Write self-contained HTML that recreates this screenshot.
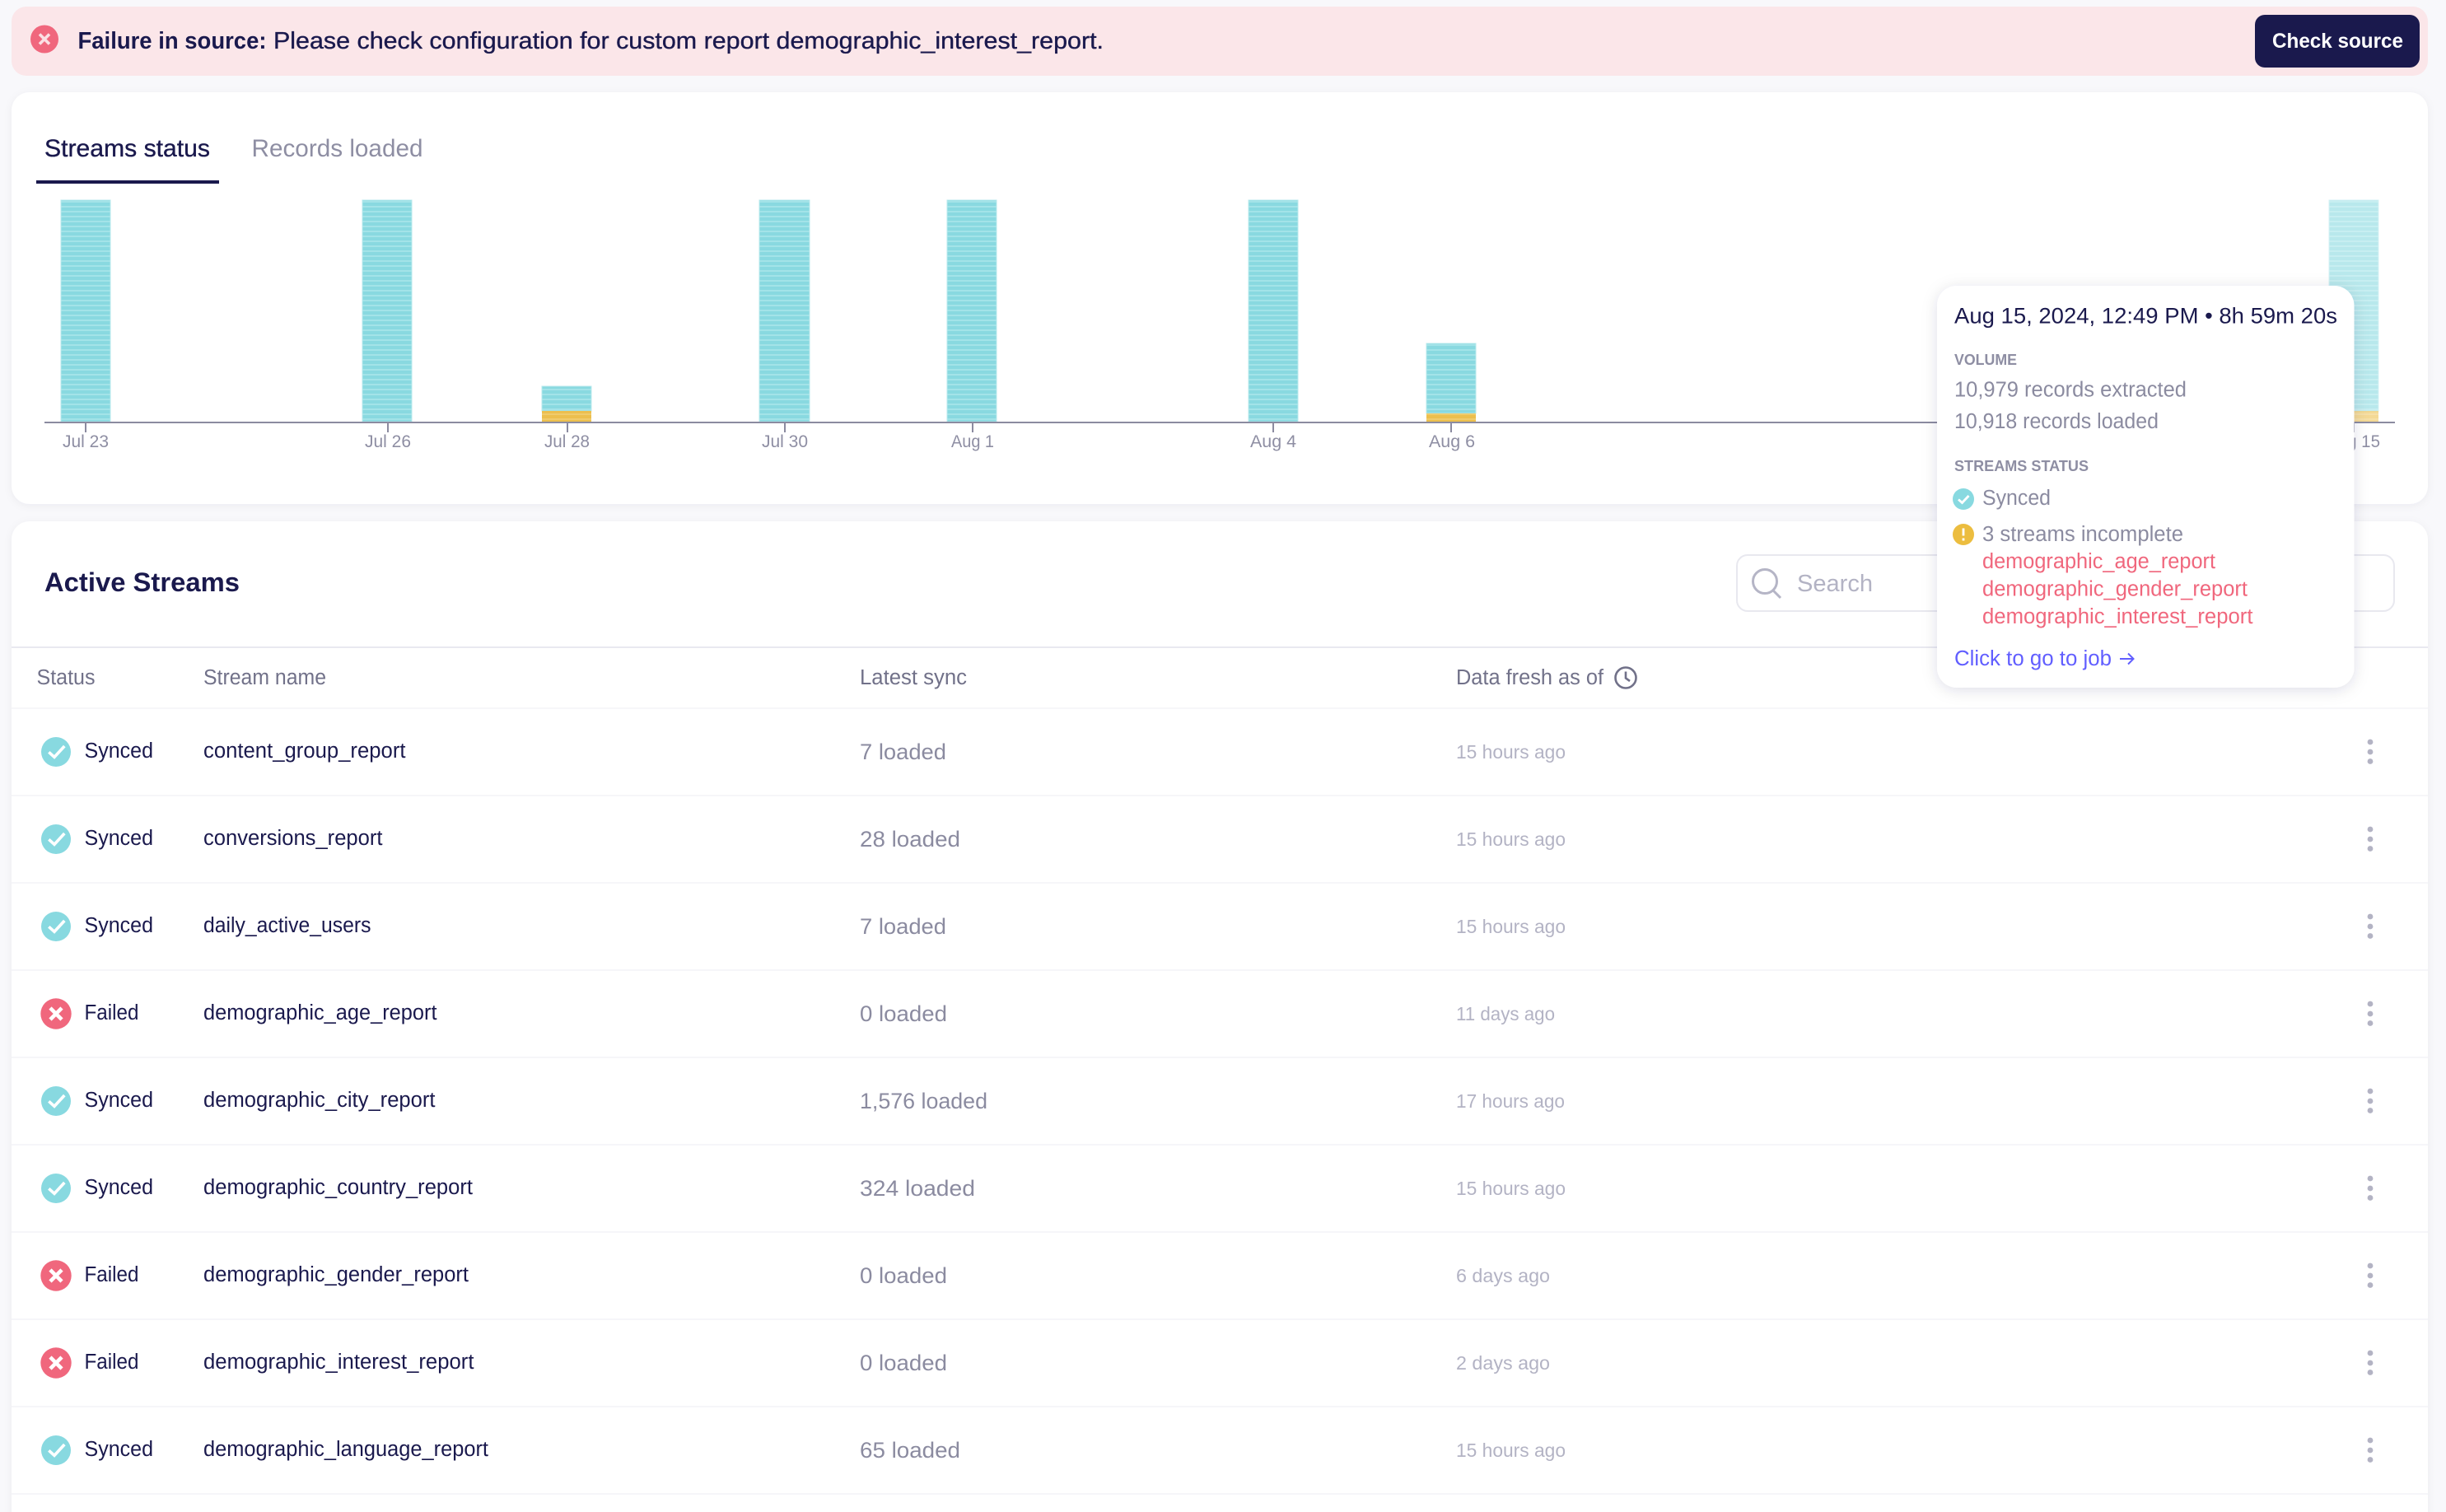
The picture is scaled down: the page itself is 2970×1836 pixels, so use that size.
<!DOCTYPE html>
<html lang="en"><head><meta charset="utf-8"><title>Active Streams</title>
<style>
html,body{margin:0;padding:0;background:#f8f8fb;width:2970px;height:1836px;overflow:hidden}
svg{display:block}
text{font-family:"Liberation Sans",Arial,sans-serif;fill:#1a194d}
.nm{font-size:25.5px}
.ls{font-size:27px;fill:#8b8ba0}
.fr{font-size:23.5px;fill:#b3b3c4}
.ax{font-size:21.5px;fill:#8e8ea3}
.hd{font-size:25.5px;fill:#717189}
.tt{font-size:25.5px;fill:#8b8ba0}
.cap{font-size:18.5px;font-weight:700;fill:#8e8ea3}
.rd{font-size:25.5px;fill:#f0677d}
</style></head><body>
<svg xmlns="http://www.w3.org/2000/svg" width="2970" height="1836" viewBox="0 0 2970 1836">
<defs>
<pattern id="s" patternUnits="userSpaceOnUse" width="10" height="6"><rect width="10" height="6" fill="#89d9e0"/><rect y="4" width="10" height="2" fill="#a3e3e8"/></pattern>
<pattern id="y" patternUnits="userSpaceOnUse" width="10" height="6"><rect width="10" height="6" fill="#ecbf4e"/><rect y="4" width="10" height="2" fill="#f0cb6c"/></pattern>
<filter id="cs" x="-2%" y="-5%" width="104%" height="110%"><feDropShadow dx="0" dy="2" stdDeviation="5" flood-color="#1a194d" flood-opacity=".05"/></filter>
<filter id="ts" x="-10%" y="-10%" width="120%" height="120%"><feDropShadow dx="0" dy="3" stdDeviation="9" flood-color="#1a194d" flood-opacity=".13"/></filter>
<g id="ok"><circle r="18" fill="#88d9e0"/><path d="M-8.7 .3L-2 6.3L10.3 -7" fill="none" stroke="#fff" stroke-width="3.6"/></g>
<g id="no"><circle r="18.7" fill="#f0677d"/><path d="M-7 -7L7 7M7 -7L-7 7" fill="none" stroke="#fff" stroke-width="4.6"/></g>
<g id="kb" fill="#b3b3c4"><circle cy="-12" r="3.4"/><circle r="3.4"/><circle cy="11.5" r="3.4"/></g>
</defs>

<!-- banner -->
<rect x="14" y="8" width="2934" height="84" rx="18" fill="#fbe6e9"/>
<circle cx="54" cy="47.5" r="17" fill="#f0677d"/>
<path d="M48 41.5L60 53.5M60 41.5L48 53.5" fill="none" stroke="#fbe0e4" stroke-width="3.6"/>
<text x="94.5" y="59" font-size="28.5" font-weight="700" textLength="229" lengthAdjust="spacingAndGlyphs">Failure in source:</text>
<text x="332" y="59" font-size="28.5" textLength="1008" lengthAdjust="spacingAndGlyphs" stroke="#1a194d" stroke-width=".35">Please check configuration for custom report demographic_interest_report.</text>
<rect x="2738" y="18" width="200" height="64" rx="12" fill="#1a194d"/>
<text x="2759" y="58" font-size="25" font-weight="700" style="fill:#fff" textLength="159" lengthAdjust="spacingAndGlyphs">Check source</text>

<!-- chart card -->
<rect x="14" y="112" width="2934" height="500" rx="22" fill="#fff" filter="url(#cs)"/>
<text x="54" y="190" font-size="29.5" textLength="201" lengthAdjust="spacingAndGlyphs" stroke="#1a194d" stroke-width=".35">Streams status</text>
<text x="305.5" y="190" font-size="29.5" style="fill:#8e8ea3" textLength="208" lengthAdjust="spacingAndGlyphs">Records loaded</text>
<rect x="44" y="219" width="222" height="4" fill="#1a194d"/>

<g stroke="#b8e9ed" stroke-width="1">
<rect x="74" y="243" width="60" height="269" fill="url(#s)"/>
<rect x="440" y="243" width="60" height="269" fill="url(#s)"/>
<rect x="658" y="469" width="60" height="30" fill="url(#s)"/>
<rect x="922" y="243" width="61" height="269" fill="url(#s)"/>
<rect x="1150" y="243" width="60" height="269" fill="url(#s)"/>
<rect x="1516" y="243" width="60" height="269" fill="url(#s)"/>
<rect x="1732" y="417" width="60" height="85" fill="url(#s)"/>
<g opacity=".6"><rect x="2828" y="243" width="60" height="256" fill="url(#s)"/></g>
</g>
<rect x="658" y="499" width="60" height="13" fill="url(#y)"/>
<rect x="1732" y="502" width="60" height="10" fill="url(#y)"/>
<rect x="2828" y="499" width="60" height="13" fill="url(#y)" opacity=".6"/>
<rect x="54" y="512" width="2854" height="2" fill="#8b8ba0"/>
<g fill="#8b8ba0">
<rect x="103" y="513" width="2" height="12"/><rect x="470" y="513" width="2" height="12"/><rect x="688" y="513" width="2" height="12"/><rect x="952" y="513" width="2" height="12"/><rect x="1180" y="513" width="2" height="12"/><rect x="1545" y="513" width="2" height="12"/><rect x="1761" y="513" width="2" height="12"/><rect x="2857" y="513" width="2" height="12"/>
</g>
<g class="ax">
<text class="ax" x="76" y="543" textLength="56" lengthAdjust="spacingAndGlyphs">Jul 23</text>
<text class="ax" x="443" y="543" textLength="56" lengthAdjust="spacingAndGlyphs">Jul 26</text>
<text class="ax" x="661" y="543" textLength="55" lengthAdjust="spacingAndGlyphs">Jul 28</text>
<text class="ax" x="925" y="543" textLength="56" lengthAdjust="spacingAndGlyphs">Jul 30</text>
<text class="ax" x="1155" y="543" textLength="52" lengthAdjust="spacingAndGlyphs">Aug 1</text>
<text class="ax" x="1518" y="543" textLength="56" lengthAdjust="spacingAndGlyphs">Aug 4</text>
<text class="ax" x="1735" y="543" textLength="56" lengthAdjust="spacingAndGlyphs">Aug 6</text>
<text class="ax" x="2825" y="543" textLength="65" lengthAdjust="spacingAndGlyphs">Aug 15</text>
</g>

<!-- streams card -->
<rect x="14" y="633" width="2934" height="1240" rx="22" fill="#fff" filter="url(#cs)"/>
<text x="54" y="718" font-size="32" font-weight="700" textLength="237" lengthAdjust="spacingAndGlyphs">Active Streams</text>
<rect x="2109" y="674" width="798" height="68" rx="13" fill="#fff" stroke="#e8e8ef" stroke-width="2"/>
<circle cx="2143" cy="706" r="14.5" fill="none" stroke="#b5b5c6" stroke-width="3"/>
<path d="M2153 717L2162 726" stroke="#b5b5c6" stroke-width="3" fill="none"/>
<text x="2182" y="718" font-size="29" style="fill:#b3b3c4" textLength="92" lengthAdjust="spacingAndGlyphs">Search</text>

<rect x="14" y="785" width="2934" height="2" fill="#e9e9f0"/>
<text class="hd" x="44.5" y="831" textLength="71" lengthAdjust="spacingAndGlyphs">Status</text>
<text class="hd" x="247" y="831" textLength="149" lengthAdjust="spacingAndGlyphs">Stream name</text>
<text class="hd" x="1044" y="831" textLength="130" lengthAdjust="spacingAndGlyphs">Latest sync</text>
<text class="hd" x="1768" y="831" textLength="179" lengthAdjust="spacingAndGlyphs">Data fresh as of</text>
<circle cx="1974" cy="823" r="12.5" fill="none" stroke="#717189" stroke-width="2.6"/>
<path d="M1974 815.5V823.5L1979 827" fill="none" stroke="#717189" stroke-width="2.6"/>

<g fill="#f6f6f9">
<rect x="14" y="859" width="2934" height="2"/><rect x="14" y="965" width="2934" height="2"/><rect x="14" y="1071" width="2934" height="2"/><rect x="14" y="1177" width="2934" height="2"/><rect x="14" y="1283" width="2934" height="2"/><rect x="14" y="1389" width="2934" height="2"/><rect x="14" y="1495" width="2934" height="2"/><rect x="14" y="1601" width="2934" height="2"/><rect x="14" y="1707" width="2934" height="2"/><rect x="14" y="1813" width="2934" height="2"/>
</g>

<!-- rows -->
<g>
<use href="#ok" x="68" y="913"/><text class="nm" x="102.5" y="920" textLength="83.5" lengthAdjust="spacingAndGlyphs">Synced</text><text class="nm" x="247" y="920" textLength="245.5" lengthAdjust="spacingAndGlyphs">content_group_report</text><text class="ls" x="1044" y="922" textLength="105" lengthAdjust="spacingAndGlyphs">7 loaded</text><text class="fr" x="1768" y="921" textLength="133" lengthAdjust="spacingAndGlyphs">15 hours ago</text><use href="#kb" x="2878" y="913"/>
<use href="#ok" x="68" y="1019"/><text class="nm" x="102.5" y="1026" textLength="83.5" lengthAdjust="spacingAndGlyphs">Synced</text><text class="nm" x="247" y="1026" textLength="217.5" lengthAdjust="spacingAndGlyphs">conversions_report</text><text class="ls" x="1044" y="1028" textLength="122" lengthAdjust="spacingAndGlyphs">28 loaded</text><text class="fr" x="1768" y="1027" textLength="133" lengthAdjust="spacingAndGlyphs">15 hours ago</text><use href="#kb" x="2878" y="1019"/>
<use href="#ok" x="68" y="1125"/><text class="nm" x="102.5" y="1132" textLength="83.5" lengthAdjust="spacingAndGlyphs">Synced</text><text class="nm" x="247" y="1132" textLength="203.5" lengthAdjust="spacingAndGlyphs">daily_active_users</text><text class="ls" x="1044" y="1134" textLength="105" lengthAdjust="spacingAndGlyphs">7 loaded</text><text class="fr" x="1768" y="1133" textLength="133" lengthAdjust="spacingAndGlyphs">15 hours ago</text><use href="#kb" x="2878" y="1125"/>
<use href="#no" x="68" y="1231"/><text class="nm" x="102.5" y="1238" textLength="66" lengthAdjust="spacingAndGlyphs">Failed</text><text class="nm" x="247" y="1238" textLength="283.5" lengthAdjust="spacingAndGlyphs">demographic_age_report</text><text class="ls" x="1044" y="1240" textLength="106" lengthAdjust="spacingAndGlyphs">0 loaded</text><text class="fr" x="1768" y="1239" textLength="120" lengthAdjust="spacingAndGlyphs">11 days ago</text><use href="#kb" x="2878" y="1231"/>
<use href="#ok" x="68" y="1337"/><text class="nm" x="102.5" y="1344" textLength="83.5" lengthAdjust="spacingAndGlyphs">Synced</text><text class="nm" x="247" y="1344" textLength="281.5" lengthAdjust="spacingAndGlyphs">demographic_city_report</text><text class="ls" x="1044" y="1346" textLength="155" lengthAdjust="spacingAndGlyphs">1,576 loaded</text><text class="fr" x="1768" y="1345" textLength="132" lengthAdjust="spacingAndGlyphs">17 hours ago</text><use href="#kb" x="2878" y="1337"/>
<use href="#ok" x="68" y="1443"/><text class="nm" x="102.5" y="1450" textLength="83.5" lengthAdjust="spacingAndGlyphs">Synced</text><text class="nm" x="247" y="1450" textLength="327" lengthAdjust="spacingAndGlyphs">demographic_country_report</text><text class="ls" x="1044" y="1452" textLength="140" lengthAdjust="spacingAndGlyphs">324 loaded</text><text class="fr" x="1768" y="1451" textLength="133" lengthAdjust="spacingAndGlyphs">15 hours ago</text><use href="#kb" x="2878" y="1443"/>
<use href="#no" x="68" y="1549"/><text class="nm" x="102.5" y="1556" textLength="66" lengthAdjust="spacingAndGlyphs">Failed</text><text class="nm" x="247" y="1556" textLength="322" lengthAdjust="spacingAndGlyphs">demographic_gender_report</text><text class="ls" x="1044" y="1558" textLength="106" lengthAdjust="spacingAndGlyphs">0 loaded</text><text class="fr" x="1768" y="1557" textLength="114" lengthAdjust="spacingAndGlyphs">6 days ago</text><use href="#kb" x="2878" y="1549"/>
<use href="#no" x="68" y="1655"/><text class="nm" x="102.5" y="1662" textLength="66" lengthAdjust="spacingAndGlyphs">Failed</text><text class="nm" x="247" y="1662" textLength="328.5" lengthAdjust="spacingAndGlyphs">demographic_interest_report</text><text class="ls" x="1044" y="1664" textLength="106" lengthAdjust="spacingAndGlyphs">0 loaded</text><text class="fr" x="1768" y="1663" textLength="114" lengthAdjust="spacingAndGlyphs">2 days ago</text><use href="#kb" x="2878" y="1655"/>
<use href="#ok" x="68" y="1761"/><text class="nm" x="102.5" y="1768" textLength="83.5" lengthAdjust="spacingAndGlyphs">Synced</text><text class="nm" x="247" y="1768" textLength="346" lengthAdjust="spacingAndGlyphs">demographic_language_report</text><text class="ls" x="1044" y="1770" textLength="122" lengthAdjust="spacingAndGlyphs">65 loaded</text><text class="fr" x="1768" y="1769" textLength="133" lengthAdjust="spacingAndGlyphs">15 hours ago</text><use href="#kb" x="2878" y="1761"/>
</g>

<!-- tooltip -->
<rect x="2352" y="347" width="506.5" height="488" rx="24" fill="#fff" filter="url(#ts)"/>
<text x="2373" y="392.5" font-size="27" textLength="465" lengthAdjust="spacingAndGlyphs">Aug 15, 2024, 12:49 PM • 8h 59m 20s</text>
<text class="cap" x="2373" y="443" textLength="76" lengthAdjust="spacingAndGlyphs">VOLUME</text>
<text class="tt" x="2373" y="481.5" textLength="282" lengthAdjust="spacingAndGlyphs">10,979 records extracted</text>
<text class="tt" x="2373" y="520" textLength="248" lengthAdjust="spacingAndGlyphs">10,918 records loaded</text>
<text class="cap" x="2373" y="572" textLength="163" lengthAdjust="spacingAndGlyphs">STREAMS STATUS</text>
<circle cx="2384" cy="606" r="13" fill="#88d9e0"/>
<path d="M2378 606.5L2382.5 610.5L2390.5 602" fill="none" stroke="#fff" stroke-width="2.8"/>
<text class="tt" x="2407" y="613" textLength="83" lengthAdjust="spacingAndGlyphs">Synced</text>
<circle cx="2384" cy="649" r="13" fill="#ecbd3f"/>
<path d="M2384 641.5V650.5M2384 653.5V656.5" fill="none" stroke="#fff" stroke-width="2.8"/>
<text class="tt" x="2407" y="657" textLength="244" lengthAdjust="spacingAndGlyphs">3 streams incomplete</text>
<text class="rd" x="2407" y="690" textLength="283" lengthAdjust="spacingAndGlyphs">demographic_age_report</text>
<text class="rd" x="2407" y="723.5" textLength="322" lengthAdjust="spacingAndGlyphs">demographic_gender_report</text>
<text class="rd" x="2407" y="757" textLength="328.5" lengthAdjust="spacingAndGlyphs">demographic_interest_report</text>
<text x="2373" y="808" font-size="25.5" style="fill:#615eff" textLength="191" lengthAdjust="spacingAndGlyphs">Click to go to job</text>
<path d="M2574 800H2590.5M2584 793.5L2590.5 800L2584 806.5" fill="none" stroke="#615eff" stroke-width="2"/>
</svg>
</body></html>
